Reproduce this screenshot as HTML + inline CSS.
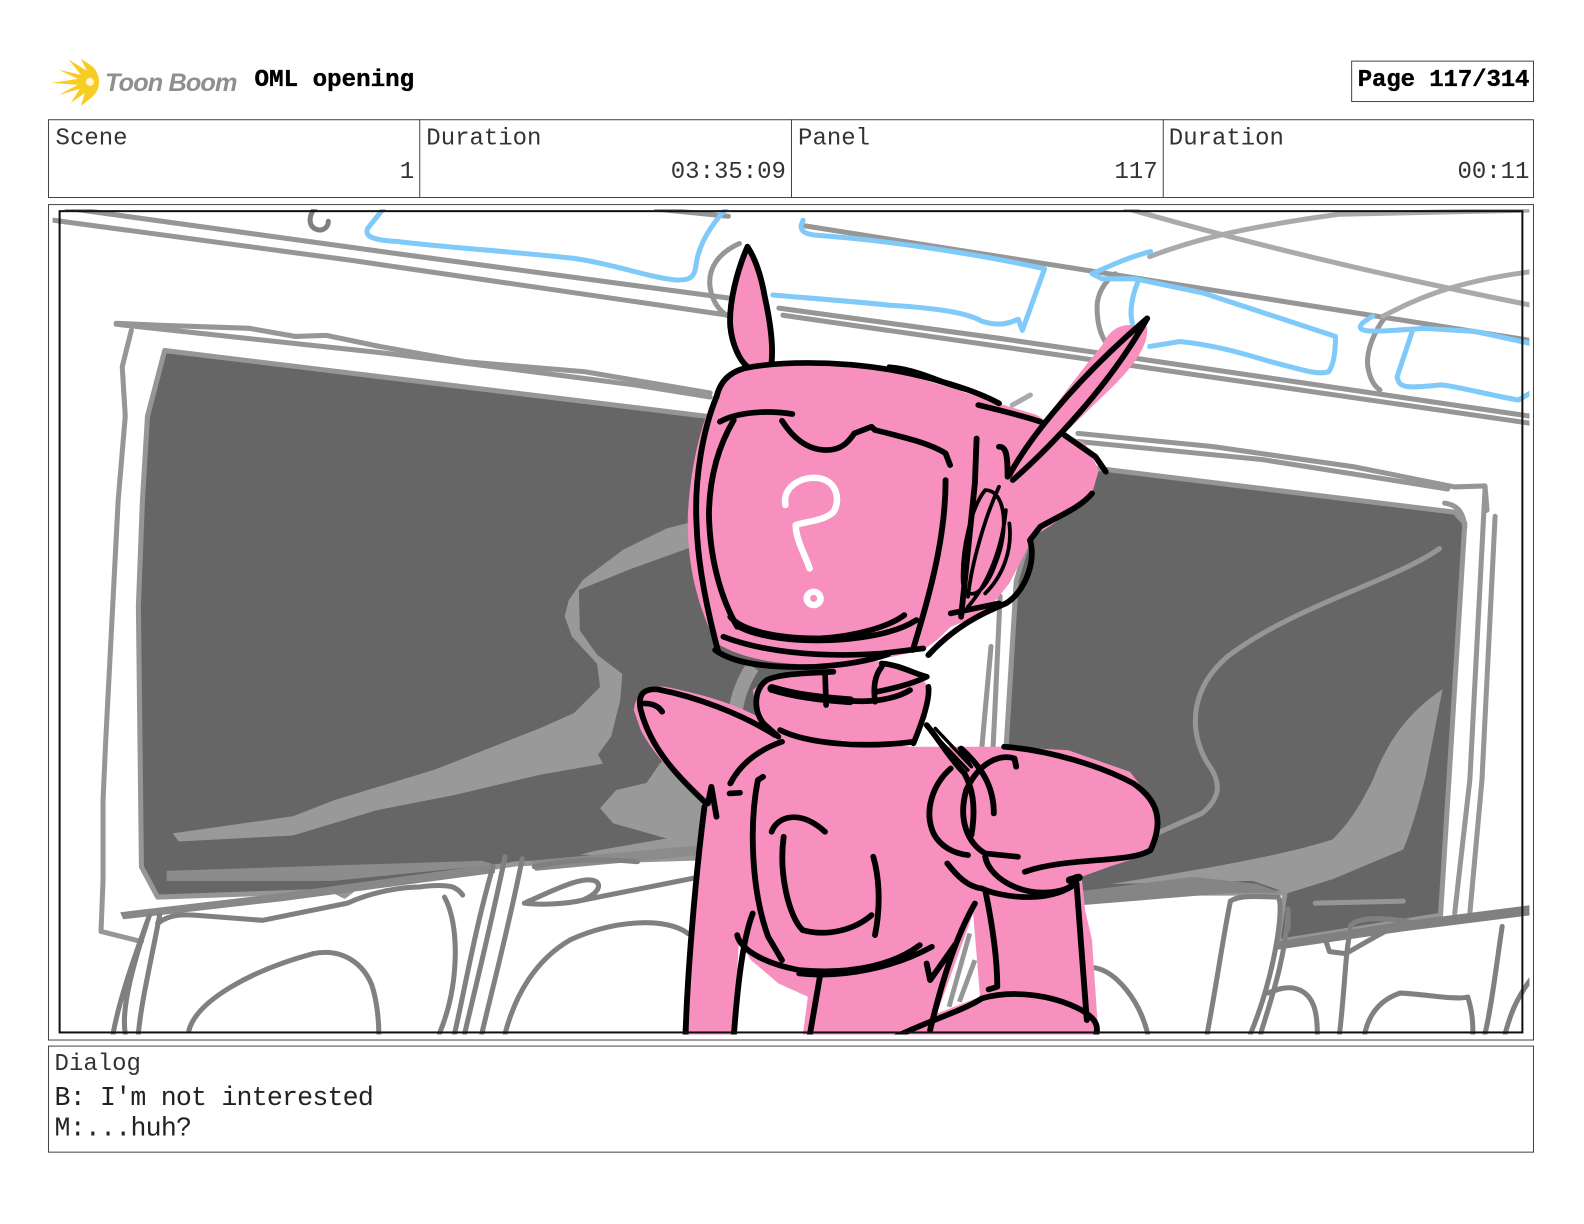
<!DOCTYPE html>
<html lang="en"><head><meta charset="utf-8"><title>OML opening</title>
<style>
html,body{margin:0;padding:0;background:#fff}
svg{display:block}
.t{font-family:"Liberation Mono",monospace;font-size:23.75px;fill:#333}
.b{font-family:"Liberation Mono",monospace;font-size:23.75px;font-weight:bold;fill:#000;stroke:#000;stroke-width:.35px}
.g{fill:none;stroke:#808080;stroke-width:5;stroke-linecap:round;stroke-linejoin:round}
.l{fill:none;stroke:#969696;stroke-width:5;stroke-linecap:round;stroke-linejoin:round}
.x{fill:none;stroke:#aaa;stroke-width:5;stroke-linecap:round;stroke-linejoin:round}
.c{fill:none;stroke:#7fcaf9;stroke-width:5;stroke-linecap:round;stroke-linejoin:round}
.k{fill:none;stroke:#000;stroke-width:17;stroke-linecap:round;stroke-linejoin:round}
</style></head><body>
<svg width="1584" height="1224" viewBox="0 0 1568 1211.600" xmlns="http://www.w3.org/2000/svg">
<defs><clipPath id="art"><rect x="52" y="207" width="1462" height="817"/></clipPath></defs>
<rect width="1568" height="1212" fill="#fff"/>

<!-- logo -->
<path fill="#f9cc22" d="M68 59L86 70L80 58L92 66C96 70 98 76 98 81C98 88 95 93 90 97L80 105L84 92L70 102L79 88L58 94L77 84L51 82L77 78L58 69L80 74Z"/>
<circle cx="89" cy="81" r="4" fill="#fff6cc"/>
<text x="104" y="90" font-family="'Liberation Sans',sans-serif" font-size="25" font-weight="bold" font-style="italic" fill="#8f8f8f" textLength="131">Toon Boom</text>
<text x="252" y="85" class="b" textLength="158" lengthAdjust="spacingAndGlyphs">OML opening</text>
<rect x="1338" y="60.500" width="180" height="40" fill="none" stroke="#444"/>
<text x="1344" y="85" class="b" textLength="170">Page 117/314</text>

<!-- info table -->
<rect x="48" y="118.500" width="1470" height="77" fill="none" stroke="#444"/>
<path d="M415.500 118V195M783.500 118V195M1151.500 118V195" stroke="#444" fill="none"/>
<text x="55" y="143" class="t">Scene</text>
<text x="410" y="176" class="t" text-anchor="end">1</text>
<text x="422" y="143" class="t">Duration</text>
<text x="778" y="176" class="t" text-anchor="end">03:35:09</text>
<text x="790" y="143" class="t">Panel</text>
<text x="1146" y="176" class="t" text-anchor="end">117</text>
<text x="1157" y="143" class="t">Duration</text>
<text x="1514" y="176" class="t" text-anchor="end">00:11</text>

<!-- panel frame -->
<rect x="48" y="202.500" width="1470" height="827" fill="none" stroke="#444"/>

<g clip-path="url(#art)">
<!-- windows -->
<path d="M163 347L699 412L830 428V845L511 855L350 880L341 887L331 882L156 888L140 858L137 600L141 495L146 412Z" fill="#666" stroke="#969696" stroke-width="5" stroke-linejoin="round"/>
<path d="M1040 458L1440 507L1450 518L1426 906L1265 932L1272 884L1071 884L996 880L996 739L1006 575Z" fill="#666" stroke="#969696" stroke-width="5" stroke-linejoin="round"/>

<!-- light swoosh left -->
<path fill="#999" d="M680 518L660 523L617 544L577 574L563 594L559 610L566 630L591 657L594 680L568 706L534 721L430 762L331 792L290 808L171 825L177 833L290 827L373 802L450 787L534 767L597 756L592 747L605 729L614 693L616 667L591 648L574 624L573 584L625 563L700 536V518Z"/>
<path fill="#999" d="M653 756L640 775L610 782L594 800L607 815L660 830L590 842L574 846L700 850H760V745L720 700Z"/>
<path d="M745 660C735 675 730 690 728 705" fill="none" stroke="#999" stroke-width="14"/>
<!-- light shape right -->
<path d="M1359 772C1345 800 1335 815 1319 831C1260 850 1160 865 1100 875L1240 872L1275 884L1320 870L1389 841C1398 820 1406 790 1412 765L1428 682C1395 705 1375 730 1359 772Z" fill="#999"/>
<path class="l" d="M1425 543C1380 575 1280 600 1215 650C1180 680 1175 720 1195 755C1210 775 1208 790 1190 805L1145 825"/>
<path class="l" d="M1302 894L1389 892"/>

<!-- top rails -->
<path class="l" d="M66 206L400 252L721 295M53 218L350 258L721 312"/>
<path class="l" d="M771 305L990 335L1515 412M775 312L990 343L1515 419M650 207L721 214"/>
<path class="l" d="M793 223L990 254L1515 337"/>
<path class="l" d="M732 241C712 250 700 265 703 285C705 298 712 308 721 313"/>
<path class="l" d="M1104 271C1092 280 1086 292 1086 304C1086 318 1089 330 1094 338M1372 313C1360 328 1352 348 1354 363C1356 375 1360 382 1366 386"/>
<path class="g" d="M312 206C306 212 305 222 311 226C318 230 325 226 325 219"/>
<path class="x" d="M1114 206C1250 245 1380 275 1515 302M1138 254C1180 238 1225 226 1326 212L1515 208M1369 313C1395 300 1430 280 1515 269M1002 401L1020 391"/>

<!-- window frame -->
<path class="l" d="M115 320L159 322L247 325L292 333L323 332L376 343L460 358L579 368L703 389"/>
<path class="l" d="M115 321L217 332L385 350L504 365L628 381L703 393"/>
<path class="l" d="M130 327L121 363L124 412L117 495C110 620 106 700 102 792L102 871L100 922L140 932"/>
<path class="l" d="M1067 429L1200 442L1340 462L1440 482L1470 481L1472 505M1067 437L1250 455L1433 484"/>
<path class="l" d="M1430 498C1445 500 1449 510 1450 522"/>
<path class="l" d="M1470 485L1455 772L1440 904M1480 511L1467 772L1455 904"/>
<path class="l" d="M990 590L985 700L983 740M981 640L972 739"/>

<!-- bottom bands -->
<path d="M165 862L477 852L490 856L330 872L165 872Z" fill="#8c8c8c"/>
<path d="M119 903L280 884L490 855L490 864L280 892L122 910Z" fill="#888"/>
<path d="M525 852L700 836V846L530 862Z" fill="#8c8c8c"/>
<path d="M1071 882L1181 868L1245 875L1268 884L1218 884L1071 896Z" fill="#858585"/>
<path d="M1265 932L1389 912L1515 896V906L1389 922L1265 940Z" fill="#808080"/>
<path class="g" d="M1312 930L1316 942L1332 944L1362 927L1386 914"/>
<path class="g" d="M1275 900V920"/>

<!-- chairs -->
<path class="g" d="M156 914C168 905 180 905 194 906L260 911L344 894C370 882 400 878 415 878C430 876 440 876 448 878C453 880 456 883 458 886"/>
<path class="g" d="M440 888C455 915 455 975 435 1023"/>
<path class="g" d="M187 1020C195 990 250 960 310 944C340 938 360 955 368 975C373 990 375 1010 375 1023"/>
<path class="g" d="M148 906C132 950 118 990 112 1023M158 906C150 950 140 990 137 1023M145 915C130 960 120 1000 124 1023"/>
<path class="g" d="M488 858C470 920 460 980 450 1023M500 848C485 920 470 980 460 1023M517 850C503 920 487 980 477 1023"/>
<path class="g" d="M500 1023C510 985 530 950 565 930C610 910 660 908 681 924"/>
<path class="g" d="M519 894C540 885 565 872 581 871C596 870 598 882 577 891C560 895 535 896 519 894ZM577 891L693 868M529 858C565 850 600 850 631 853"/>
<path class="g" d="M1195 1023C1205 970 1212 920 1218 892C1228 885 1250 888 1265 888C1272 895 1262 965 1238 1023M1275 904C1272 950 1258 990 1248 1023"/>
<path class="g" d="M1255 983C1265 979 1272 977 1280 978C1302 982 1304 1005 1304 1023"/>
<path class="g" d="M1326 1023C1330 990 1332 950 1334 937L1337 916C1345 908 1365 908 1393 912"/>
<path class="g" d="M1351 1023C1355 1005 1365 990 1386 983C1410 984 1440 990 1453 987C1457 1000 1458 1010 1458 1023"/>
<path class="g" d="M1487 917C1482 950 1476 1000 1470 1023M1515 970C1500 990 1495 1005 1490 1023"/>
<path class="g" d="M1084 958C1105 962 1128 990 1136 1023"/>

<!-- blue -->
<path class="c" d="M380 206L364 226C360 235 372 238 394 239C430 244 520 250 570 256C610 262 640 274 668 277C682 278 688 275 689 262C692 240 705 222 719 206"/>
<path class="c" d="M795 218C790 228 795 232 810 233C880 238 970 252 1034 266L1012 327L1008 316C995 322 985 322 972 318C958 310 930 305 880 302C840 298 800 295 765 292"/>
<path class="c" d="M1139 249C1115 255 1095 265 1081 271L1091 276L1124 276L1191 290L1252 310L1322 333C1322 350 1320 362 1315 368C1305 371 1295 368 1258 358C1230 350 1205 342 1168 338L1138 343M1126 280C1120 295 1118 310 1121 320"/>
<path class="c" d="M1359 313C1350 318 1345 322 1347 325C1350 330 1380 327 1409 325L1460 328L1515 340M1398 328L1383 373C1385 385 1393 384 1426 381C1440 382 1470 390 1503 396L1515 389"/>

<!-- robot head -->
<g transform="translate(613.800,227.700) scale(.341,.33)">
<path fill="#f78fbf" d="M290 470Q320 420 360 410L430 400C560 385 700 395 780 415C850 440 950 470 1010 490L1100 520L1210 555L1290 610L1350 640L1390 720L1370 790L1260 880L1200 920L1130 1060L1060 1150L960 1190L920 1230L880 1260L700 1300C500 1310 380 1300 280 1240C225 1130 192 1000 197 850C205 700 240 550 290 470Z"/>
<path fill="#f78fbf" d="M370 50C340 120 315 220 320 290C325 340 345 390 370 410L440 395C445 320 430 200 410 140C395 90 385 60 370 50Z"/>
<path fill="#f78fbf" d="M1400 345C1420 300 1450 285 1480 285L1530 290C1535 340 1500 400 1420 480L1290 610L1140 750L1130 735C1180 640 1300 470 1400 345Z"/>
<path class="k" d="M370 50C340 120 315 220 320 290C325 340 345 390 370 410M370 50C395 90 410 140 420 200C435 270 445 340 440 395"/>
<path class="k" d="M280 500C290 460 310 430 360 415C450 395 620 390 790 420C900 440 1030 480 1100 520"/>
<path class="k" style="stroke-width:10" d="M780 408C850 412 930 450 1005 480M800 420C860 430 930 460 1000 480"/>
<path class="k" d="M1040 525C1100 540 1180 560 1220 575"/>
<path class="k" d="M280 500C240 600 215 750 222 880C225 1000 250 1130 285 1265"/>
<path class="k" d="M330 570C290 640 260 730 258 850C260 980 290 1100 340 1190"/>
<path class="k" d="M290 575C340 545 430 540 500 552"/>
<path class="k" d="M470 572C500 620 540 660 600 660C640 660 660 640 680 610L730 590L740 600C820 620 900 640 945 670L958 705"/>
<path class="k" d="M945 750C945 900 910 1050 870 1190L850 1260"/>
<path class="k" d="M320 1160C350 1200 450 1225 580 1225C680 1220 780 1190 825 1155"/>
<path class="k" d="M345 1190C400 1220 500 1235 620 1230C700 1225 800 1210 860 1170"/>
<path class="k" d="M300 1220C400 1260 560 1285 760 1270L880 1255"/>
<path class="k" d="M1035 625L1030 760L990 1160M1100 650C1120 650 1125 670 1125 740"/>
<path class="k" style="stroke-width:11" d="M1060 780C1020 830 990 960 995 1060C1010 1120 1060 1090 1090 1000C1130 900 1120 780 1060 780ZM1100 770C1060 860 1020 1000 1010 1100M1120 840C1110 950 1070 1060 1010 1130M1130 880C1140 960 1110 1040 1060 1090"/>
<path class="k" d="M1130 735C1180 640 1300 470 1530 265C1420 470 1240 660 1140 750"/>
<path class="k" d="M1290 615L1380 680L1410 725"/>
<path class="k" d="M1370 790C1340 830 1270 860 1220 890L1190 930C1210 1000 1170 1090 1120 1120C1050 1150 970 1190 895 1275"/>
<path class="k" d="M960 1150L1100 1120"/>
<path d="M480 825C470 770 530 735 580 745C630 755 640 810 620 845C590 875 530 875 510 885C510 930 540 980 550 1015" fill="none" stroke="#fff" stroke-width="19" stroke-linecap="round" stroke-linejoin="round"/>
<circle cx="562" cy="1105" r="20" fill="#f78fbf" stroke="#fff" stroke-width="19"/>
</g>

<!-- robot body -->
<g transform="translate(613.800,633.600) scale(.341,.33)">
<path fill="#f78fbf" d="M40 210C45 160 80 135 130 140C230 160 330 190 400 230L480 280L330 440L250 500C180 430 100 350 60 270Z"/>
<path fill="#f78fbf" d="M470 290L850 320L1110 320L1300 330L1480 395L1560 500L1540 640L1420 680L1340 710L1350 810L1370 900L1385 1130L1390 1190H530L545 1070L460 1030L380 960L345 900L330 1190H180L215 700L250 470L330 420Z"/>
<path fill="#fff" d="M1025 820L920 1120L1045 1070Z"/>
<path d="M1015 880L955 1100M1030 960L985 1085" stroke="#969696" stroke-width="14" fill="none"/>
<path class="k" d="M250 490C170 410 90 330 60 210C50 160 70 145 110 148C220 170 350 220 450 285"/>
<path class="k" d="M70 190C90 190 110 195 122 215"/>
<path class="k" d="M320 430C350 370 400 330 470 305M318 460L348 458"/>
<path class="k" d="M280 530L265 440L255 490M245 500C220 700 195 1000 190 1190"/>
<path class="k" d="M415 410L400 420C375 550 380 750 430 890L470 960"/>
<path class="k" d="M475 590C460 700 490 830 530 870C600 890 680 870 730 825"/>
<path class="k" d="M440 575C455 530 520 505 595 575"/>
<path class="k" d="M735 650C755 720 755 810 740 885"/>
<path class="k" d="M340 885C350 930 420 970 520 990C680 1005 800 970 870 915M520 1000C650 1015 800 980 905 920"/>
<path class="k" d="M385 820C355 900 340 1050 330 1190M580 1010L550 1190"/>
<path class="k" style="stroke-width:10" d="M890 260L1010 390M915 265L1020 380M985 325L1020 380"/>
<path class="k" d="M890 255C920 290 960 360 1000 400C1020 440 1035 490 1020 585"/>
<path class="k" d="M960 385C910 430 880 510 910 580C930 620 970 640 1010 645"/>
<path class="k" d="M1150 380L1145 355C1100 340 1040 370 1005 450C980 540 1010 610 1060 640L1155 650"/>
<path class="k" d="M990 325C1060 390 1085 450 1085 520"/>
<path class="k" d="M1115 320C1250 330 1400 380 1490 430C1560 480 1580 540 1540 630C1480 670 1300 650 1175 695"/>
<path class="k" d="M1060 650C1070 710 1160 770 1260 755C1300 750 1330 730 1325 710"/>
<path class="k" d="M950 670C980 710 1010 740 1050 745C1100 770 1230 790 1310 740"/>
<path class="k" style="stroke-width:22" d="M1305 720L1332 712"/>
<path class="k" d="M1325 730L1355 1140"/>
<path class="k" d="M1060 750C1080 850 1095 950 1095 1040L1070 1048"/>
<path class="k" d="M800 1190C900 1140 1000 1110 1050 1075C1130 1050 1250 1060 1340 1110C1370 1130 1395 1150 1380 1190"/>
<path class="k" d="M1030 790C980 880 940 1000 900 1170M890 970L900 1020L975 910"/>
</g>

<!-- neck -->
<g transform="translate(693,623.700) scale(.33)">
<path fill="#f78fbf" d="M380 100L560 92L660 138L692 180L680 260L640 345L240 320L170 250L158 180L200 145L380 125Z"/>
<path class="k" d="M45 60C100 100 200 115 350 110C430 105 500 95 565 72"/>
<path class="k" d="M400 125C320 130 240 130 200 150C160 180 160 240 190 280L235 320"/>
<path class="k" style="stroke-width:26" d="M215 175C280 195 350 205 450 212"/>
<path class="k" d="M450 212C520 218 590 205 630 180"/>
<path class="k" d="M375 130L378 225M545 110C520 140 520 180 525 215"/>
<path class="k" d="M545 100C600 105 640 130 680 140C640 160 580 175 530 185"/>
<path class="k" d="M685 170C690 210 665 280 640 340M240 300C320 340 480 355 640 335"/>
</g>
</g>

<!-- black safe frame -->
<rect x="59" y="209" width="1448" height="813" fill="none" stroke="#111" stroke-width="2"/>

<!-- dialog -->
<rect x="48" y="1035.500" width="1470" height="105" fill="none" stroke="#444"/>
<text x="54" y="1059" class="t">Dialog</text>
<text x="54" y="1094" class="t" style="font-size:26.300px;fill:#222" textLength="316">B: I'm not interested</text>
<text x="54" y="1124" class="t" style="font-size:26.300px;fill:#222" textLength="136">M:...huh?</text>
</svg>
</body></html>
